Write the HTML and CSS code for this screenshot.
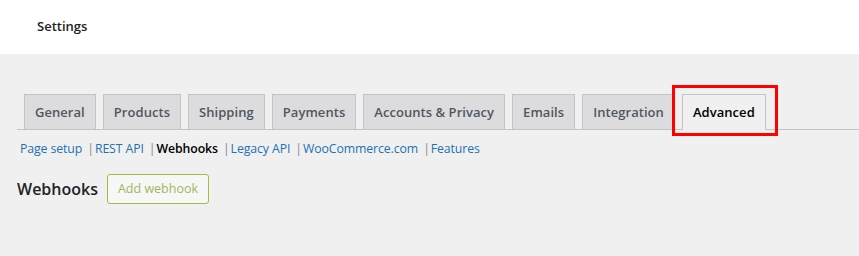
FILE: index.html
```html
<!DOCTYPE html>
<html>
<head>
<meta charset="utf-8">
<link rel="stylesheet" href="styles.css">
</head>
<body>
<header class="topbar"><span class="title">Settings</span></header>
<main class="wrap">
  <nav class="tabs">
    <a class="tab">General</a>
    <a class="tab">Products</a>
    <a class="tab">Shipping</a>
    <a class="tab">Payments</a>
    <a class="tab">Accounts &amp; Privacy</a>
    <a class="tab">Emails</a>
    <a class="tab">Integration</a>
    <a class="tab tab-active">Advanced</a>
  </nav>
  <ul class="subnav">
    <li><a class="sublink">Page setup</a><span class="sep">|</span></li>
    <li><a class="sublink">REST API</a><span class="sep">|</span></li>
    <li><strong class="current">Webhooks</strong><span class="sep">|</span></li>
    <li><a class="sublink">Legacy API</a><span class="sep">|</span></li>
    <li><a class="sublink">WooCommerce.com</a><span class="sep">|</span></li>
    <li><a class="sublink">Features</a></li>
  </ul>
  <div class="heading-row">
    <h2 class="heading">Webhooks</h2>
    <a class="add-btn">Add webhook</a>
  </div>
</main>
</body>
</html>
```

FILE: styles.css
```css
* { box-sizing: border-box; }
html, body { margin: 0; padding: 0; }
body {
  background: #f0f0f1;
  font-family: "Open Sans", "Noto Sans", sans-serif;
  color: #3c434a;
  width: 859px;
  height: 256px;
  overflow: hidden;
}
.topbar {
  background: #fff;
  height: 54px;
  padding: 14px 0 0 37px;
}
.title {
  font-size: 13px;
  font-weight: 600;
  color: #1d2327;
  line-height: 20px;
}
.wrap { padding: 40px 0 0 17px; }
.tabs {
  display: flex;
  border-bottom: 1px solid #c3c4c7;
  height: 36px;
}
.tab {
  display: block;
  margin-left: 7px;
  height: 36px;
  padding: 5px 10px;
  border: 1px solid #c3c4c7;
  background: #dcdcde;
  color: #50575e;
  font-size: 13px;
  font-weight: 600;
  line-height: 24px;
  letter-spacing: 0.05px;
  white-space: nowrap;
}
.tab-active {
  position: relative;
  background: #f0f0f1;
  border-bottom-color: #f0f0f1;
  color: #000;
}
.tab-active::after {
  content: "";
  position: absolute;
  left: -11px;
  right: -13px;
  top: -10px;
  bottom: -7px;
  border: 3px solid #f00;
}
.subnav {
  list-style: none;
  margin: 10px 0 0 3px;
  padding: 0;
  display: flex;
  font-size: 12.3px;
  line-height: 18px;
  letter-spacing: -0.1px;
}
.subnav li { display: flex; white-space: nowrap; }
.sublink { color: #2271b1; }
.current { color: #000; font-weight: 600; }
.sep { color: #7c8a99; margin: 0 1px 0 5px; }
.heading-row {
  display: flex;
  align-items: center;
  margin-top: 16px;
}
.heading {
  margin: 0;
  font-size: 16px;
  font-weight: 600;
  color: #1d2327;
  line-height: 30px;
}
.add-btn {
  margin-left: 9px;
  height: 30px;
  padding: 0 10px;
  border: 1px solid #a7bc3e;
  border-radius: 3px;
  background: #f6f7f7;
  color: #a3b65a;
  font-size: 12.5px;
  line-height: 28px;
}
```
